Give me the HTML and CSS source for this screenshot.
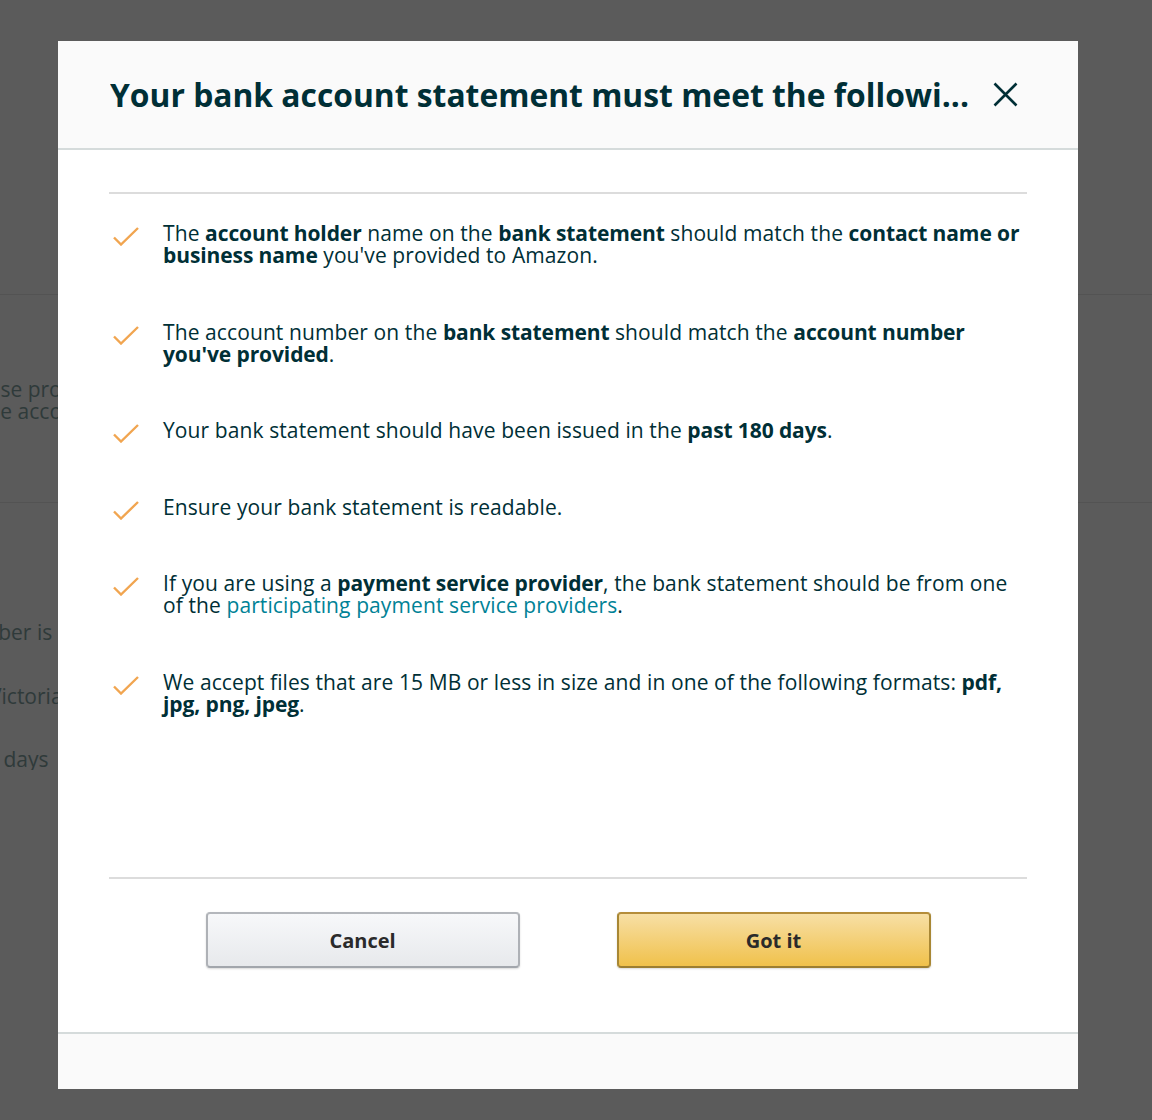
FILE: index.html
```html
<!DOCTYPE html>
<html lang="en">
<head>
<meta charset="UTF-8">
<meta name="viewport" content="width=device-width, initial-scale=1.0">
<title>Bank account statement requirements</title>
<link rel="stylesheet" href="styles.css">
</head>
<body>

<!-- page behind the dialog, dimmed -->
<div class="page">
    <div class="page-section">
        <p class="page-line line-a">Please provide a bank statement</p>
        <p class="page-line line-b">the account holder</p>
    </div>
    <p class="page-line line-c">number is</p>
    <p class="page-line line-d">Victoria</p>
    <p class="page-line line-e">180 days</p>
</div>

<div class="overlay">
    <div class="modal" role="dialog" aria-labelledby="modalTitle">
        <div class="modal-header">
            <h2 id="modalTitle" class="modal-title">Your bank account statement must meet the followi...</h2>
            <button type="button" class="close-btn" aria-label="Close">
                <svg width="25" height="25" viewBox="0 0 25 25">
                    <path d="M1.5 1.5 L23.5 23.5 M23.5 1.5 L1.5 23.5" stroke="#002f36" stroke-width="2.6" fill="none"/>
                </svg>
            </button>
        </div>

        <div class="modal-body">
            <ul class="checklist">
                <li>
                    <svg class="check" width="26" height="19" viewBox="0 0 26 19"><path d="M1 10.5 L8 17.5 L25 1" stroke="#f1a550" stroke-width="2.4" fill="none"/></svg>
                    <p>The <b>account holder</b> name on the <b>bank statement</b> should match the <b>contact name or business name</b> you've provided to Amazon.</p>
                </li>
                <li>
                    <svg class="check" width="26" height="19" viewBox="0 0 26 19"><path d="M1 10.5 L8 17.5 L25 1" stroke="#f1a550" stroke-width="2.4" fill="none"/></svg>
                    <p>The account number on the <b>bank statement</b> should match the <b>account number you've provided</b>.</p>
                </li>
                <li>
                    <svg class="check" width="26" height="19" viewBox="0 0 26 19"><path d="M1 10.5 L8 17.5 L25 1" stroke="#f1a550" stroke-width="2.4" fill="none"/></svg>
                    <p>Your bank statement should have been issued in the <b>past 180 days</b>.</p>
                </li>
                <li>
                    <svg class="check" width="26" height="19" viewBox="0 0 26 19"><path d="M1 10.5 L8 17.5 L25 1" stroke="#f1a550" stroke-width="2.4" fill="none"/></svg>
                    <p>Ensure your bank statement is readable.</p>
                </li>
                <li>
                    <svg class="check" width="26" height="19" viewBox="0 0 26 19"><path d="M1 10.5 L8 17.5 L25 1" stroke="#f1a550" stroke-width="2.4" fill="none"/></svg>
                    <p>If you are using a <b>payment service provider</b>, the bank statement should be from one of the <a href="#">participating payment service providers</a>.</p>
                </li>
                <li>
                    <svg class="check" width="26" height="19" viewBox="0 0 26 19"><path d="M1 10.5 L8 17.5 L25 1" stroke="#f1a550" stroke-width="2.4" fill="none"/></svg>
                    <p>We accept files that are 15 MB or less in size and in one of the following formats: <b>pdf, jpg, png, jpeg</b>.</p>
                </li>
            </ul>

            <div class="actions">
                <button type="button" class="btn btn-secondary">Cancel</button>
                <button type="button" class="btn btn-primary">Got it</button>
            </div>
        </div>

        <div class="modal-footer"></div>
    </div>
</div>

</body>
</html>
```

FILE: styles.css
```css
body {
    margin: 0;
    padding: 0;
    background-color: #5b5b5b;
    font-family: "Open Sans", "Noto Sans", Arial, sans-serif;
    color: #002f36;
}
.page {
    padding-top: 294px;
    overflow: hidden;
    color: #2f3a3a;
    font-size: 21px;
    line-height: 22px;
}
.page-section {
    border-top: 1px solid #535353;
    border-bottom: 1px solid #535353;
    padding: 83px 0 80px;
    margin-bottom: 118px;
}
.page-line {
    margin: 0;
    white-space: nowrap;
}
.line-a { text-indent: -41px; }
.line-b { text-indent: -20px; }
.line-c { text-indent: -47px; margin-bottom: 42px; }
.line-d { text-indent: -11px; margin-bottom: 41px; }
.line-e { text-indent: -38px; }

.overlay {
    position: fixed;
    inset: 0;
    padding: 41px 0 0 58px;
}
.modal {
    width: 1020px;
    background-color: #fff;
}
.modal-header {
    display: flex;
    align-items: center;
    height: 107px;
    padding: 0 60px 0 52px;
    background-color: #fafafa;
    border-bottom: 2px solid #d5dbdb;
}
.modal-title {
    flex: 1;
    margin: 0;
    font-size: 31.8px;
    font-weight: 700;
    white-space: nowrap;
    overflow: hidden;
}
.close-btn {
    display: flex;
    margin-left: 12px;
    padding: 0;
    border: none;
    background: none;
    cursor: pointer;
}
.modal-body {
    padding: 42px 51px 0;
}
.checklist {
    box-sizing: border-box;
    min-height: 685px;
    margin: 0;
    padding: 28px 0 0;
    list-style: none;
    border-top: 2px solid #dcdcdc;
}
.checklist li {
    display: flex;
    align-items: flex-start;
    margin-bottom: 54.5px;
}
.check {
    flex: none;
    margin: 5px 24px -5px 4px;
}
.checklist p {
    margin: 0;
    font-size: 21px;
    line-height: 22px;
    letter-spacing: 0.1px;
}
.checklist b {
    font-weight: 700;
    letter-spacing: -0.1px;
}
.checklist a {
    color: #008296;
    text-decoration: none;
}
.actions {
    display: flex;
    justify-content: center;
    gap: 97px;
    padding: 33px 0 64px;
    border-top: 2px solid #dcdcdc;
}
.btn {
    width: 314px;
    height: 56px;
    border: 2px solid;
    border-radius: 4px;
    font-family: inherit;
    font-size: 20px;
    font-weight: 700;
    color: #2a2a2a;
    cursor: pointer;
    box-shadow: 0 1px 2px rgba(0, 0, 0, 0.15);
}
.btn-secondary {
    background: linear-gradient(to bottom, #f7f8fa, #e7e9ec);
    border-color: #b4b7bc #aeb1b6 #a2a6ac;
}
.btn-primary {
    background: linear-gradient(to bottom, #f7dfa5, #f0c14b);
    border-color: #b58d3a #a88734 #9c7e31;
}
.modal-footer {
    height: 55px;
    background-color: #fafafa;
    border-top: 2px solid #d5dbdb;
}
```
